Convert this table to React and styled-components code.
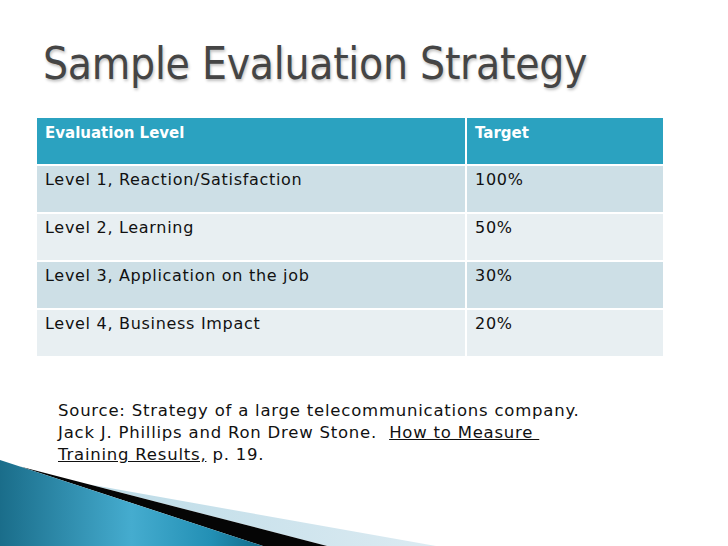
import React from 'react';
import styled, { createGlobalStyle } from 'styled-components';

const Global = createGlobalStyle`
    html, body {
        margin: 0;
        padding: 0;
        background: #ffffff;
    }
`

const Slide = styled.div`
    position: relative;
    width: 728px;
    height: 546px;
    overflow: hidden;
    background: #ffffff;
    font-family: "DejaVu Sans", Verdana, sans-serif;
`

const Title = styled.h1`
    margin: 0;
    padding: 42px 0 0 43px;
    height: 84px;
    box-sizing: border-box;
    font-family: "DejaVu Sans Condensed", "DejaVu Sans", sans-serif;
    font-weight: normal;
    font-size: 44px;
    line-height: 44px;
    letter-spacing: -0.3px;
    color: #454545;
    text-shadow: 1px 2px 3px rgba(0, 0, 0, 0.25);
`

const Table = styled.div`
    display: grid;
    grid-template-columns: 428px 196px;
    column-gap: 2px;
    row-gap: 2px;
    width: 626px;
    margin: 34px 0 0 37px;
`

const Cell = styled.div`
    height: 46px;
    box-sizing: border-box;
    padding: ${(props) => (props.head ? '5px' : '4px')} 0 0 8px;
    font-size: ${(props) => (props.head ? '15px' : '16px')};
    font-weight: ${(props) => (props.head ? 'bold' : 'normal')};
    letter-spacing: ${(props) => (props.head ? '0' : '0.7px')};
    color: ${(props) => (props.head ? '#ffffff' : '#111111')};
    background: ${(props) => props.bg};
    line-height: 20px;
`

const Caption = styled.div`
    margin: 44px 0 0 58px;
    font-size: 16.5px;
    line-height: 22px;
    letter-spacing: 0.78px;
    color: #111111;
`

const Under = styled.span`
    text-decoration: underline;
`

const Swoosh = styled.svg`
    position: absolute;
    left: 0;
    bottom: 0;
`

const rows = [
    ['Level 1, Reaction/Satisfaction', '100%'],
    ['Level 2, Learning', '50%'],
    ['Level 3, Application on the job', '30%'],
    ['Level 4, Business Impact', '20%'],
]

export default function App() {
    return (
        <Slide>
            <Global />
            <Title>Sample Evaluation Strategy</Title>
            <Table>
                <Cell head bg="#2ba2c0">Evaluation Level</Cell>
                <Cell head bg="#2ba2c0">Target</Cell>
                {rows.map((r, i) => (
                    <React.Fragment key={r[0]}>
                        <Cell bg={i % 2 === 0 ? '#cddfe6' : '#e8eff2'}>{r[0]}</Cell>
                        <Cell bg={i % 2 === 0 ? '#cddfe6' : '#e8eff2'}>{r[1]}</Cell>
                    </React.Fragment>
                ))}
            </Table>
            <Caption>
                Source: Strategy of a large telecommunications company.<br />
                Jack J. Phillips and Ron Drew Stone.&nbsp; <Under>How to Measure&nbsp;</Under><br />
                <Under>Training Results,</Under> p. 19.
            </Caption>
            {/* bottom-left theme swoosh, svg top sits at y=456 */}
            <Swoosh width="440" height="90" viewBox="0 0 440 90">
                <defs>
                    <linearGradient id="blue" x1="0" y1="0" x2="1" y2="0">
                        <stop offset="0" stopColor="#1a6d8a" />
                        <stop offset="0.5" stopColor="#45accf" />
                        <stop offset="0.8" stopColor="#2390b5" />
                        <stop offset="1" stopColor="#116a88" />
                    </linearGradient>
                    <linearGradient id="pale" x1="0" y1="0" x2="1" y2="0">
                        <stop offset="0" stopColor="#bcdbe7" />
                        <stop offset="1" stopColor="#dcebf2" />
                    </linearGradient>
                </defs>
                <polygon points="90,28.6 436,90 327,90" fill="url(#pale)" />
                <polygon points="20,10.5 327,90 263,90" fill="#050505" />
                <polygon points="0,4 263,90 0,90" fill="url(#blue)" />
            </Swoosh>
        </Slide>
    )
}
